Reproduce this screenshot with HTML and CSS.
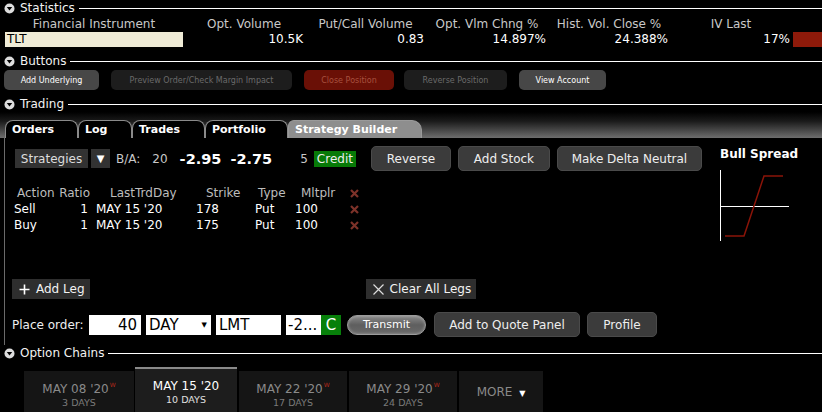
FILE: index.html
```html
<!DOCTYPE html>
<html lang="en">
<head>
    <meta charset="UTF-8">
    <title>Strategy Builder</title>
    <link rel="stylesheet" href="styles.css">
</head>
<body>
    <!-- Statistics -->
    <div class="sec-head">
        <svg class="toggle" width="11" height="11" viewBox="0 0 11 11"><circle cx="5.5" cy="5.5" r="5" fill="#ddd"/><path d="M2.8 4 H8.2 L5.5 7.6 Z" fill="#000"/></svg>
        <span class="sec-title">Statistics</span>
        <span class="rule"></span>
    </div>
    <div class="stats">
        <div class="lbl">Financial Instrument</div>
        <div class="lbl">Opt. Volume</div>
        <div class="lbl">Put/Call Volume</div>
        <div class="lbl">Opt. Vlm Chng %</div>
        <div class="lbl">Hist. Vol. Close %</div>
        <div class="lbl">IV Last</div>
        <div></div>
        <div class="symbol">TLT</div>
        <div class="val">10.5K</div>
        <div class="val">0.83</div>
        <div class="val">14.897%</div>
        <div class="val">24.388%</div>
        <div class="val">17%</div>
        <div class="iv-bar"></div>
    </div>

    <!-- Buttons -->
    <div class="sec-head">
        <svg class="toggle" width="11" height="11" viewBox="0 0 11 11"><circle cx="5.5" cy="5.5" r="5" fill="#ddd"/><path d="M2.8 4 H8.2 L5.5 7.6 Z" fill="#000"/></svg>
        <span class="sec-title">Buttons</span>
        <span class="rule"></span>
    </div>
    <div class="action-bar">
        <button class="act w-under">Add Underlying</button>
        <button class="act off w-preview">Preview Order/Check Margin Impact</button>
        <button class="act danger w-close">Close Position</button>
        <button class="act off w-reverse">Reverse Position</button>
        <button class="act w-account">View Account</button>
    </div>

    <!-- Trading -->
    <div class="sec-head">
        <svg class="toggle" width="11" height="11" viewBox="0 0 11 11"><circle cx="5.5" cy="5.5" r="5" fill="#ddd"/><path d="M2.8 4 H8.2 L5.5 7.6 Z" fill="#000"/></svg>
        <span class="sec-title">Trading</span>
        <span class="rule"></span>
    </div>
    <div class="tab-strip">
        <div class="tab t-orders">Orders</div>
        <div class="tab t-log">Log</div>
        <div class="tab t-trades">Trades</div>
        <div class="tab t-portfolio">Portfolio</div>
        <div class="tab active t-builder">Strategy Builder</div>
    </div>

    <div class="panel">
        <div class="builder">
            <div class="quote-row">
                <button class="strat">Strategies</button>
                <button class="strat-arrow">&#9660;</button>
                <span class="dim ba">B/A:</span>
                <span class="dim size-bid">20</span>
                <span class="price bid">-2.95</span>
                <span class="price">-2.75</span>
                <span class="dim size-ask">5</span>
                <span class="credit">Credit</span>
                <button class="tool w-rev">Reverse</button>
                <button class="tool w-stock">Add Stock</button>
                <button class="tool w-delta">Make Delta Neutral</button>
            </div>

            <div class="legs">
                <div class="leg-row leg-head">
                    <span>Action</span>
                    <span class="num">Ratio</span>
                    <span>LastTrdDay</span>
                    <span>Strike</span>
                    <span>Type</span>
                    <span>Mltplr</span>
                    <span class="del"><svg width="9" height="9" viewBox="0 0 9 9"><path d="M1 1 L8 8 M8 1 L1 8" stroke="#7d3229" stroke-width="2.2"/></svg></span>
                </div>
                <div class="leg-row">
                    <span>Sell</span>
                    <span class="num">1</span>
                    <span>MAY 15 '20</span>
                    <span>178</span>
                    <span>Put</span>
                    <span>100</span>
                    <span class="del"><svg width="9" height="9" viewBox="0 0 9 9"><path d="M1 1 L8 8 M8 1 L1 8" stroke="#7d3229" stroke-width="2.2"/></svg></span>
                </div>
                <div class="leg-row">
                    <span>Buy</span>
                    <span class="num">1</span>
                    <span>MAY 15 '20</span>
                    <span>175</span>
                    <span>Put</span>
                    <span>100</span>
                    <span class="del"><svg width="9" height="9" viewBox="0 0 9 9"><path d="M1 1 L8 8 M8 1 L1 8" stroke="#7d3229" stroke-width="2.2"/></svg></span>
                </div>
            </div>

            <div class="leg-tools">
                <button class="flat"><svg width="11" height="11" viewBox="0 0 11 11"><path d="M5.5 0.5 V10.5 M0.5 5.5 H10.5" stroke="#fff" stroke-width="1.6"/></svg>Add Leg</button>
                <button class="flat clear"><svg width="11" height="11" viewBox="0 0 11 11"><path d="M0.5 0.5 L10.5 10.5 M10.5 0.5 L0.5 10.5" stroke="#ddd" stroke-width="1.2"/></svg>Clear All Legs</button>
            </div>

            <div class="order-row">
                <span class="order-lbl">Place order:</span>
                <span class="field qty">40</span>
                <span class="field tif">DAY<span class="caret">&#9660;</span></span>
                <span class="field otype">LMT</span>
                <span class="field lmt">-2...</span><span class="c-flag">C</span>
                <button class="transmit">Transmit</button>
                <button class="tool w-quote">Add to Quote Panel</button>
                <button class="tool w-profile">Profile</button>
            </div>
        </div>

        <div class="payoff">
            <div class="payoff-title">Bull Spread</div>
            <svg width="72" height="72" viewBox="0 0 72 72">
                <path d="M0.5 0 V71" stroke="#fff" stroke-width="1"/>
                <path d="M0 36.5 H69" stroke="#fff" stroke-width="1"/>
                <polyline points="5,66 24,66 44,6 63,6" fill="none" stroke="#8b1408" stroke-width="1.5"/>
            </svg>
        </div>
    </div>

    <!-- Option Chains -->
    <div class="sec-head">
        <svg class="toggle" width="11" height="11" viewBox="0 0 11 11"><circle cx="5.5" cy="5.5" r="5" fill="#ddd"/><path d="M2.8 4 H8.2 L5.5 7.6 Z" fill="#000"/></svg>
        <span class="sec-title">Option Chains</span>
        <span class="rule"></span>
    </div>
    <div class="expiries">
        <div class="exp w-08"><div class="exp-date">MAY 08 '20<sup>W</sup></div><div class="exp-days">3 DAYS</div></div>
        <div class="exp on w-15"><div class="exp-date">MAY 15 '20</div><div class="exp-days">10 DAYS</div></div>
        <div class="exp w-22"><div class="exp-date">MAY 22 '20<sup>W</sup></div><div class="exp-days">17 DAYS</div></div>
        <div class="exp w-29"><div class="exp-date">MAY 29 '20<sup>W</sup></div><div class="exp-days">24 DAYS</div></div>
        <div class="exp more w-more">MORE <span class="more-caret">&#9660;</span></div>
    </div>
</body>
</html>
```

FILE: styles.css
```css
body {
    margin: 0;
    background: #000;
    color: #fff;
    font-family: "DejaVu Sans", sans-serif;
    font-size: 12px;
    overflow: hidden;
}
button {
    font-family: inherit;
    cursor: pointer;
}

/* section headers */
.sec-head {
    display: flex;
    align-items: center;
    height: 16px;
    padding-left: 4px;
}
.sec-title {
    margin-left: 5px;
    font-size: 12px;
    color: #f2f2f2;
}
.rule {
    flex: 1;
    height: 1px;
    background: #fff;
    margin-left: 4px;
}

/* statistics */
.stats {
    display: grid;
    grid-template-columns: 178px 122px 121px 122px 122px 122px 1fr;
    grid-template-rows: 16px 15px;
    padding-left: 5px;
    margin-bottom: 6px;
}
.lbl {
    color: #c8c8c8;
    text-align: center;
    line-height: 16px;
}
.symbol {
    background: #efebd6;
    color: #000;
    padding-left: 2px;
    line-height: 15px;
}
.val {
    text-align: right;
    padding-right: 2px;
    line-height: 15px;
}
.iv-bar {
    background: #8e1a0a;
    margin-left: 1px;
}

/* top action buttons */
.action-bar {
    display: flex;
    gap: 12px;
    padding-left: 4px;
    height: 20px;
    margin: 1px 0 6px;
}
.act {
    height: 20px;
    border: none;
    border-radius: 5px;
    background: #474747;
    color: #fff;
    font-size: 8px;
    padding: 0;
}
.act.off {
    background: #1d1d1d;
    color: #6a6a6a;
}
.act.danger {
    background: #6a1006;
    color: #a8503f;
}
.w-under { width: 95px; }
.w-preview { width: 181px; }
.w-close { width: 90px; }
.w-reverse { width: 103px; margin-left: -2px; }
.w-account { width: 87px; }

/* trading tabs */
.tab-strip {
    display: flex;
    align-items: flex-end;
    height: 26px;
    padding-left: 5px;
    background: linear-gradient(to bottom, #000 0%, #1a1a1a 35%, #6e6e6e 100%);
}
.tab {
    height: 18px;
    line-height: 18px;
    padding-left: 6px;
    background: #000;
    border: 1px solid #8a8a8a;
    border-bottom: none;
    border-radius: 8px 8px 0 0;
    font-weight: bold;
    font-size: 11px;
    box-sizing: border-box;
}
.tab.active {
    background: #8e8e8e;
    border-color: #9a9a9a;
    border-radius: 6px 10px 0 0;
}
.t-orders { width: 73px; }
.t-log { width: 54px; }
.t-trades { width: 73px; }
.t-portfolio { width: 83px; }
.t-builder { width: 134px; }

.panel {
    display: flex;
    margin-left: 4px;
    border-left: 1px solid #6a6a6a;
    padding: 8px 0 8px 7px;
}
.builder {
    width: 700px;
}
.quote-row {
    display: flex;
    align-items: center;
    height: 25px;
}
.strat {
    margin-left: 3px;
    width: 73px;
    height: 19px;
    border: none;
    background: #323232;
    color: #ddd;
    font-size: 12px;
    padding: 0;
}
.strat-arrow {
    margin-left: 3px;
    width: 19px;
    height: 19px;
    border: none;
    background: #323232;
    color: #fff;
    font-size: 10px;
    padding: 0;
}
.dim {
    color: #c8c8c8;
}
.ba { margin-left: 6px; }
.size-bid { margin-left: 12px; }
.price {
    font-weight: bold;
    font-size: 14.5px;
    margin-left: 9px;
}
.price.bid { margin-left: 12px; }
.size-ask { margin-left: 28px; }
.credit {
    margin-left: 6px;
    background: #077a07;
    color: #eee;
    padding: 0 3px;
    line-height: 16px;
    font-size: 12px;
}
.tool {
    height: 25px;
    border: 1px solid #4a4a4a;
    border-radius: 5px;
    background: #3b3b3b;
    color: #eee;
    font-size: 12px;
    padding: 0;
}
.w-rev { width: 80px; margin-left: 15px; }
.w-stock { width: 92px; margin-left: 7px; }
.w-delta { width: 145px; margin-left: 7px; }

/* legs table */
.legs {
    margin-top: 14px;
}
.leg-row {
    display: grid;
    grid-template-columns: 42px 34px 100px 59px 40px 50px 20px;
    height: 16px;
    line-height: 16px;
    padding-left: 2px;
    font-size: 12px;
}
.leg-row span {
    padding-left: 6px;
}
.leg-row span:first-child {
    padding-left: 0;
}
.leg-row .num {
    text-align: right;
    padding: 0 2px 0 0;
}
.leg-head {
    color: #bdbdbd;
}
.leg-head span:first-child { padding-left: 3px; }
.leg-head .num { padding-right: 0; }
.leg-head span:nth-child(3) { padding-left: 20px; }
.leg-head span:nth-child(4) { padding-left: 16px; }
.leg-head span:nth-child(5) { padding-left: 9px; }
.leg-head span:nth-child(6) { padding-left: 12px; }
.leg-row .del {
    padding-left: 11px;
    display: flex;
    align-items: center;
}

.leg-tools {
    display: flex;
    margin-top: 46px;
    height: 20px;
}
.flat {
    display: flex;
    align-items: center;
    gap: 6px;
    height: 20px;
    border: none;
    background: #2e2e2e;
    color: #f2f2f2;
    font-size: 12px;
    padding: 0 5px 0 7px;
}
.clear {
    margin-left: 276px;
}

/* order entry */
.order-row {
    display: flex;
    align-items: center;
    height: 25px;
    margin-top: 13px;
}
.order-lbl {
    width: 77px;
    color: #eee;
    font-size: 12px;
}
.field {
    height: 20px;
    line-height: 20px;
    background: #fff;
    color: #000;
    font-size: 15px;
    box-sizing: border-box;
    margin-left: 5px;
    position: relative;
}
.qty { width: 52px; text-align: right; padding-right: 4px; margin-left: 0; }
.tif { width: 65px; padding-left: 3px; }
.otype { width: 65px; padding-left: 3px; }
.lmt { width: 35px; padding-left: 2px; overflow: hidden; white-space: nowrap; }
.caret {
    position: absolute;
    right: 4px;
    top: 0;
    font-size: 7px;
}
.c-flag {
    width: 20px;
    height: 20px;
    line-height: 20px;
    text-align: center;
    background: #07800a;
    color: #fff;
    font-size: 15px;
}
.transmit {
    margin-left: 6px;
    width: 79px;
    height: 20px;
    border-radius: 10px;
    border: 1px solid #9c9c9c;
    background: linear-gradient(to bottom, #8a8a8a 0%, #5e5e5e 50%, #6a6a6a 100%);
    box-shadow: inset 0 0 3px rgba(255, 255, 255, 0.35);
    color: #fff;
    font-size: 11px;
    padding: 0;
}
.w-quote { width: 146px; margin-left: 8px; }
.w-profile { width: 70px; margin-left: 7px; }

/* payoff chart */
.payoff {
    margin-left: 8px;
}
.payoff-title {
    font-weight: bold;
    font-size: 12px;
    line-height: 16px;
    margin-bottom: 8px;
}

/* expiry tabs */
.expiries {
    display: flex;
    align-items: flex-start;
    gap: 2px;
    padding-left: 24px;
    margin-top: 6px;
    height: 46px;
}
.exp {
    height: 42px;
    margin-top: 4px;
    background: #151515;
    color: #8a8a8a;
    text-align: center;
    box-sizing: border-box;
    padding-top: 6px;
}
.exp.on {
    height: 46px;
    margin-top: 0;
    background: #1d1d1d;
    border-top: 2px solid #8a8a8a;
    color: #fff;
    padding-top: 9px;
}
.exp-date {
    font-size: 12px;
    line-height: 16px;
}
.exp-days {
    font-size: 9.5px;
    line-height: 12px;
    color: #7a7a7a;
}
.exp.on .exp-days {
    color: #e0e0e0;
}
.exp sup {
    font-size: 6px;
    color: #b3281a;
    vertical-align: 6px;
    margin-left: 1px;
}
.exp.more {
    line-height: 30px;
    font-size: 12px;
}
.more-caret {
    font-size: 8px;
    color: #fff;
    margin-left: 3px;
}
.w-08 { width: 110px; margin-right: -1px; }
.w-15 { width: 102px; }
.w-22 { width: 108px; }
.w-29 { width: 108px; }
.w-more { width: 84px; }
```
